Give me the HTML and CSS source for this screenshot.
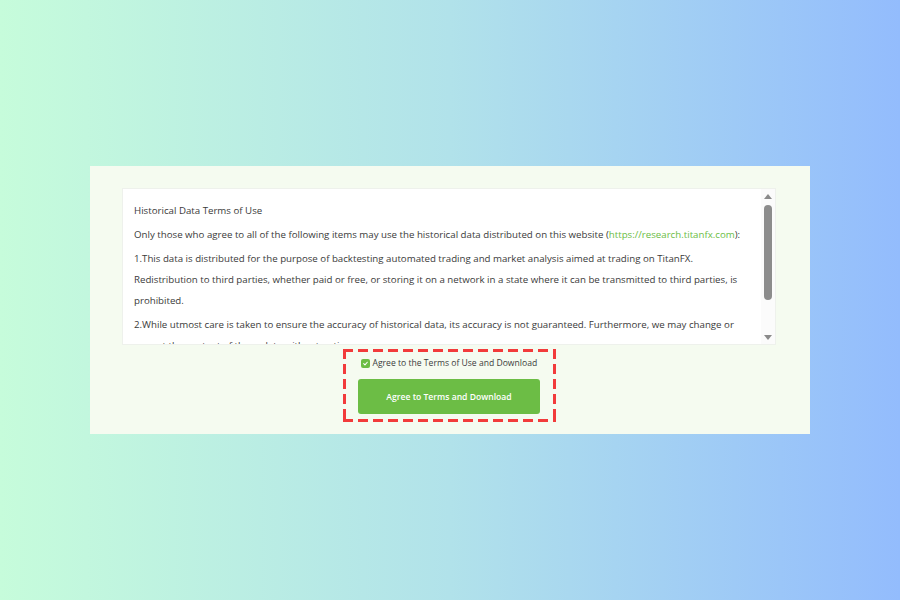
FILE: index.html
```html
<!DOCTYPE html>
<html lang="en">
<head>
<meta charset="utf-8">
<title>Historical Data Terms of Use</title>
<link rel="stylesheet" href="styles.css">
</head>
<body>
<div class="page">
  <div class="card">
    <div class="terms">
      <div class="terms-text">
        <p>Historical Data Terms of Use</p>
        <p>Only those who agree to all of the following items may use the historical data distributed on this website (<a class="link" href="#">https://research.titanfx.com</a>):</p>
        <p>1.This data is distributed for the purpose of backtesting automated trading and market analysis aimed at trading on TitanFX. Redistribution to third parties, whether paid or free, or storing it on a network in a state where it can be transmitted to third parties, is prohibited.</p>
        <p>2.While utmost care is taken to ensure the accuracy of historical data, its accuracy is not guaranteed. Furthermore, we may change or correct the content of these data without notice.</p>
      </div>
      <div class="scrollbar">
        <span class="arrow-up"></span>
        <span class="thumb-track"><span class="thumb"></span></span>
        <span class="arrow-down"></span>
      </div>
    </div>
    <div class="highlight">
      <label class="agree">
        <span class="checkbox">
          <svg viewBox="0 0 10 10" width="9" height="9"><path d="M3 5.2 L4.4 6.5 L7 3.6" fill="none" stroke="#fff" stroke-width="1.2" stroke-linecap="round" stroke-linejoin="round"/></svg>
        </span>
        <span>Agree to the Terms of Use and Download</span>
      </label>
      <button class="download">Agree to Terms and Download</button>
    </div>
  </div>
</div>
</body>
</html>
```
FILE: styles.css
```css
html, body {
  margin: 0;
  padding: 0;
}
body {
  width: 900px;
  height: 600px;
  overflow: hidden;
  font-family: "Open Sans", "Liberation Sans", sans-serif;
  background: linear-gradient(90deg, #c6fcdb 0%, #b1e2ea 50%, #93bcfd 100%);
}
.page {
  padding-top: 166px;
  display: flex;
  justify-content: center;
}
.card {
  width: 720px;
  height: 268px;
  box-sizing: border-box;
  background: #f5fbf0;
  padding: 22px 34px 0 32px;
  display: flex;
  flex-direction: column;
  align-items: center;
}
.terms {
  width: 654px;
  height: 157px;
  box-sizing: border-box;
  background: #ffffff;
  border: 1px solid #eef1ec;
  display: flex;
  overflow: hidden;
}
.terms-text {
  flex: 1;
  padding: 11px 10px 0 11px;
  font-size: 9.7px;
  line-height: 21px;
  color: #3a3a3a;
}
.terms-text p {
  margin: 0 0 3px 0;
}
.link {
  color: #6cbd45;
  text-decoration: none;
}
.scrollbar {
  width: 14px;
  display: flex;
  flex-direction: column;
  align-items: center;
  padding: 5px 0 4px;
  box-sizing: border-box;
  background: #fbfbfb;
}
.arrow-up {
  width: 0;
  height: 0;
  border-left: 4px solid transparent;
  border-right: 4px solid transparent;
  border-bottom: 5px solid #8a8a8a;
}
.arrow-down {
  width: 0;
  height: 0;
  border-left: 4px solid transparent;
  border-right: 4px solid transparent;
  border-top: 5px solid #8a8a8a;
}
.thumb-track {
  flex: 1;
  display: flex;
  flex-direction: column;
  padding-top: 6px;
}
.thumb {
  width: 8px;
  height: 95px;
  border-radius: 4px;
  background: #8c8c8c;
}
.highlight {
  margin-top: 4px;
  width: 213px;
  height: 73px;
  box-sizing: border-box;
  padding: 8px 3px 3px;
  background:
    linear-gradient(90deg, #f23b3b 0 10px, transparent 10px) left top / 15px 3px repeat-x,
    linear-gradient(90deg, #f23b3b 0 10px, transparent 10px) left bottom / 15px 3px repeat-x,
    linear-gradient(180deg, #f23b3b 0 10px, transparent 10px) left top / 3px 15px repeat-y,
    linear-gradient(180deg, #f23b3b 0 10px, transparent 10px) right top / 3px 15px repeat-y;
  display: flex;
  flex-direction: column;
  align-items: center;
}
.agree {
  display: flex;
  align-items: center;
  gap: 3px;
  font-size: 8.6px;
  line-height: 12px;
  color: #3c3c3c;
  white-space: nowrap;
  margin-left: 15px;
  align-self: flex-start;
}
.checkbox {
  width: 9px;
  height: 9px;
  border-radius: 2px;
  background: #6cbd45;
  display: flex;
  align-items: center;
  justify-content: center;
}
.download {
  margin-top: 10px;
  width: 182px;
  height: 35px;
  border: none;
  border-radius: 3px;
  background: #6cbd45;
  color: #ffffff;
  font-family: "Open Sans", "Liberation Sans", sans-serif;
  font-size: 8.6px;
  font-weight: 600;
  cursor: pointer;
}
```
